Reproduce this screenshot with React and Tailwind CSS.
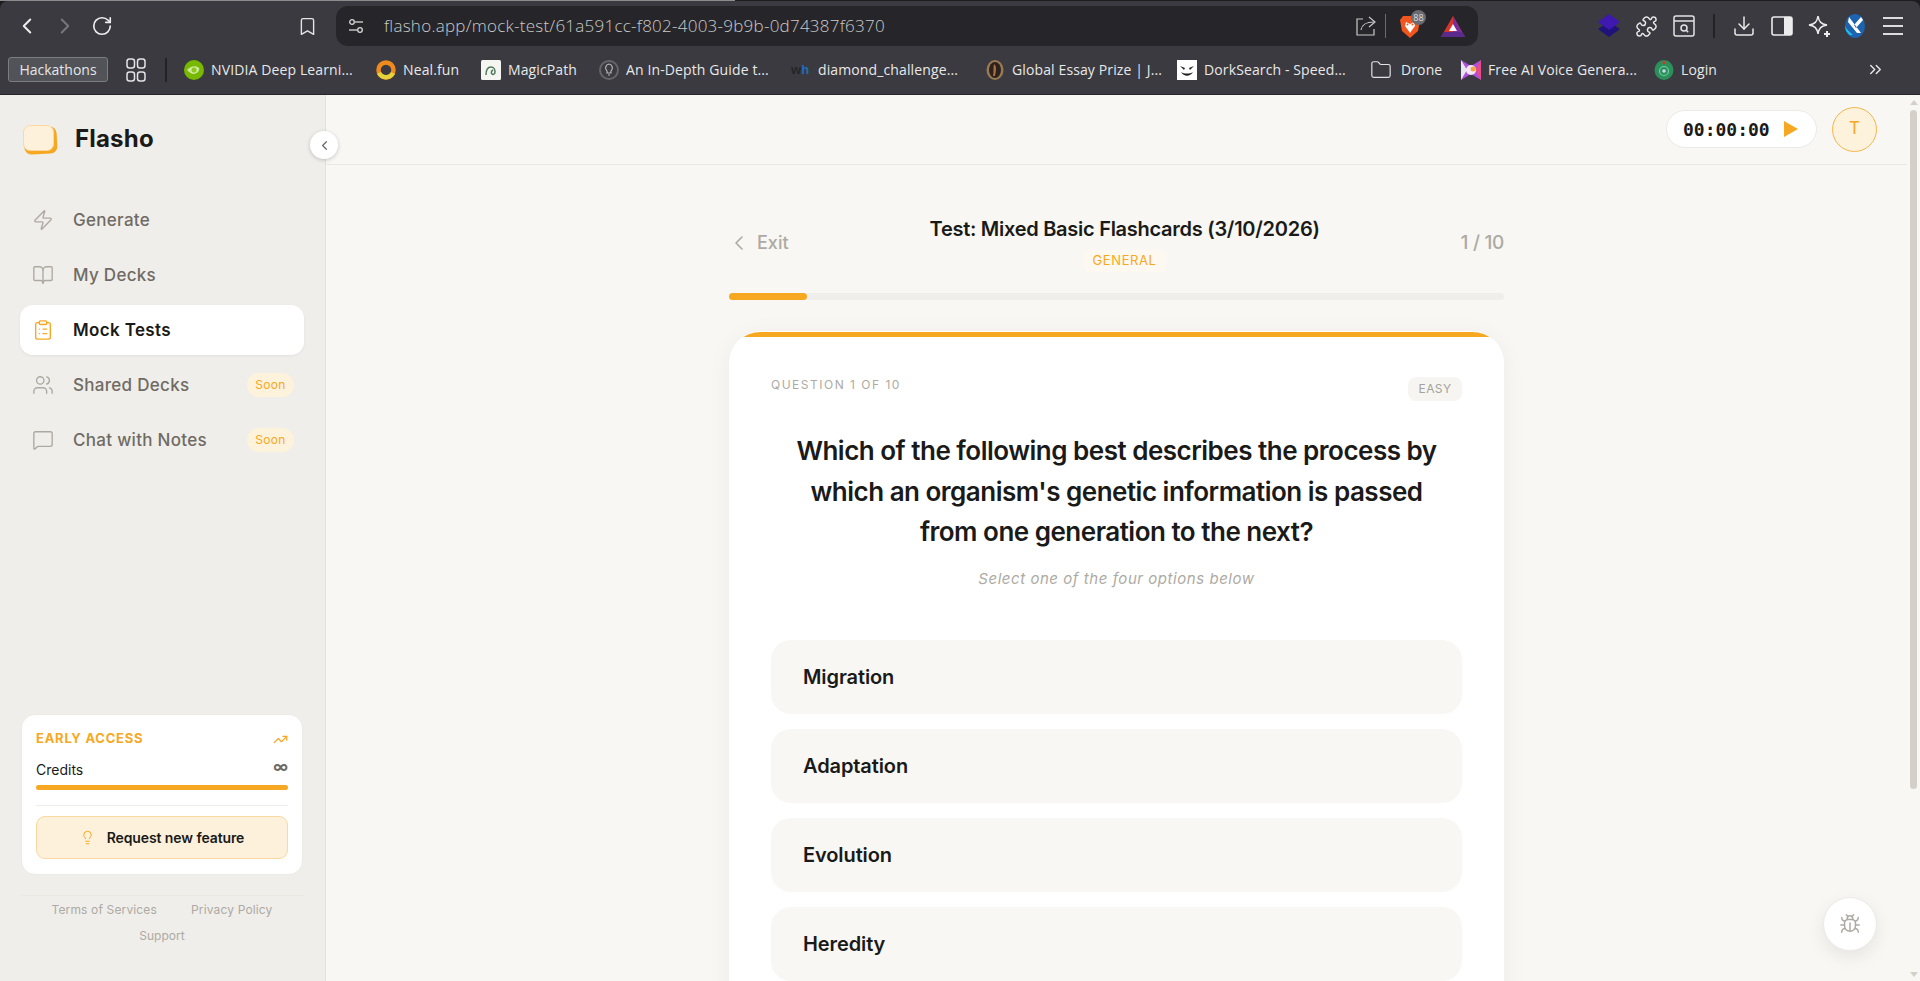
import React from "react";
import { ChevronLeft, ChevronRight, RotateCw, Bookmark, Puzzle, Download, Zap, BookOpen, Users, MessageSquare, ClipboardList, TrendingUp, Lightbulb, Bug, ChevronsRight, Folder } from "lucide-react";

const Ui = "font-['Inter','Liberation_Sans',sans-serif]";

function Favicon({ kind }) {
  if (kind === "nvidia") return <svg width="20" height="20" viewBox="0 0 20 20"><circle cx="10" cy="10" r="10" fill="#76b900" /><path d="M3 10c3-4 9-5 12-2 1 2-1 5-5 6-3 0-5-2-7-4z" fill="#cfe89a" /><circle cx="10" cy="10" r="2.5" fill="#8cc820" /></svg>;
  if (kind === "neal") return <svg width="20" height="20" viewBox="0 0 20 20"><circle cx="10" cy="10" r="7.5" fill="none" stroke="#ef8a1f" strokeWidth="4.5" /><path d="M3 13a8 8 0 0 0 14 0" fill="none" stroke="#e6d23a" strokeWidth="4.5" /></svg>;
  if (kind === "magic") return <svg width="20" height="20" viewBox="0 0 20 20"><rect width="20" height="20" rx="1.5" fill="#f5f5f2" /><path d="M5 15c0-5 2-8 5-8s4 3 4 5-2 3-3 2-1-3 1-4" fill="none" stroke="#4e7a5a" strokeWidth="1.5" /></svg>;
  if (kind === "guide") return <svg width="20" height="20" viewBox="0 0 20 20"><circle cx="10" cy="10" r="9" fill="none" stroke="#66666a" strokeWidth="2" /><path d="M10 4a4 4 0 0 0-2 7v2h4v-2a4 4 0 0 0-2-7z" fill="none" stroke="#b8b8b8" strokeWidth="1.2" /><path d="M9 15h2" stroke="#b8b8b8" strokeWidth="1.2" /></svg>;
  if (kind === "wh") return <span className="w-5 text-[13px] leading-5 font-bold font-['Liberation_Sans',sans-serif] text-[#23262c]">w<span className="text-[#1d6fb8]">h</span></span>;
  if (kind === "global") return <svg width="20" height="20" viewBox="0 0 20 20"><ellipse cx="10" cy="10" rx="8.5" ry="10" fill="#9a7a50" /><ellipse cx="10" cy="10" rx="6" ry="8" fill="#2b2322" /><path d="M9 4c3 2 2 7 1 12H8c1-4 0-8 1-12z" fill="#b0703c" /></svg>;
  if (kind === "dork") return <svg width="20" height="20" viewBox="0 0 20 20"><rect width="20" height="20" fill="#fff" /><path d="M3 6l5 2-1 2zM17 6l-5 2 1 2z" fill="#222" /><path d="M4 12c3 5 9 5 12 0-3 2-9 2-12 0z" fill="#222" /></svg>;
  if (kind === "folder") return <Folder size={22} strokeWidth={1.3} className="shrink-0 text-[#e2e2e2]" />;
  if (kind === "free") return <svg width="20" height="20" viewBox="0 0 20 20"><path d="M0 0l10 6 10-6v20l-10-6-10 6z" fill="#b04fd8" /><path d="M0 0l6 10-6 10z" fill="#e8e8f0" /><path d="M20 0l-6 10 6 10z" fill="#e84b8a" /><circle cx="10" cy="10" r="5" fill="#f4e8ff" /><circle cx="12" cy="9" r="2.5" fill="#f3a43c" /></svg>;
  return <svg width="20" height="20" viewBox="0 0 20 20"><ellipse cx="10" cy="10" rx="9.5" ry="10" fill="#2c8f5c" /><circle cx="10" cy="11" r="4.5" fill="none" stroke="#6fd0a0" strokeWidth="1.2" /><circle cx="10" cy="11" r="1.8" fill="#c8d8e8" /><circle cx="10" cy="2.5" r="1.5" fill="#d8352a" /></svg>;
}

const bookmarks = [
  { k: "nvidia", t: "NVIDIA Deep Learni...", w: "w-[145px]", g: "gap-[7px]" },
  { k: "neal", t: "Neal.fun", w: "w-[58px]", g: "gap-[7px]" },
  { k: "magic", t: "MagicPath", w: "w-[71px]", g: "gap-[7px]" },
  { k: "guide", t: "An In-Depth Guide t...", w: "w-[145px]", g: "gap-[7px]" },
  { k: "wh", t: "diamond_challenge...", w: "w-[147px]", g: "gap-[7px]" },
  { k: "global", t: "Global Essay Prize | J...", w: "w-[145px]", g: "gap-[7px]" },
  { k: "dork", t: "DorkSearch - Speed...", w: "w-[147px]", g: "gap-[7px]" },
  { k: "folder", t: "Drone", w: "w-[40px]", g: "gap-[10px]" },
  { k: "free", t: "Free AI Voice Genera...", w: "w-[146px]", g: "gap-[7px]" },
  { k: "login", t: "Login", w: "w-[36px]", g: "gap-[7px]" },
];

function BrowserChrome() {
  return (
    <div className="h-[95px] shrink-0 bg-[#1d1d20] font-['Open_Sans',sans-serif]">
      <div className="h-px w-[735px] bg-[#8c8c8c]" />
      <div className="h-[94px] rounded-t-[8px] bg-[#3a3a40] border-b border-[#26262a] flex flex-col">
        <div className="h-[50px] shrink-0 flex items-center">
          <ChevronLeft size={26} strokeWidth={1.8} className="ml-[14px] text-[#eeeeee]" />
          <ChevronRight size={26} strokeWidth={1.8} className="ml-[12px] text-[#77777c]" />
          <RotateCw size={22} strokeWidth={1.8} className="ml-[13px] text-[#eeeeee]" />
          <Bookmark size={21} strokeWidth={1.6} className="ml-[184px] text-[#e4e4e4]" />
          <div className="ml-[18px] w-[1142px] h-[40px] rounded-[12px] bg-[#26262a] flex items-center">
            <svg width="20" height="20" viewBox="0 0 20 20" className="ml-[10px] text-[#d8d8d8]" fill="none" stroke="currentColor" strokeWidth="1.3"><circle cx="6" cy="6" r="2.3" /><path d="M9 6h8" /><circle cx="14" cy="14" r="2.3" /><path d="M3 14h8" /></svg>
            <span className="ml-[18px] w-[500px] text-[17px] tracking-[0.25px] font-light text-[#c9c9c9] whitespace-nowrap">flasho.app/mock-test/61a591cc-f802-4003-9b9b-0d74387f6370</span>
            <svg width="21" height="21" viewBox="0 0 21 21" fill="none" stroke="#c8c8c8" strokeWidth="1.2" className="ml-[471px]"><path d="M8 3H2v16h17v-6" /><path d="M6 14c1-6 5-8 13-8" /><path d="M14 1l6 5-6 5" /></svg>
            <div className="ml-[9px] h-[24px] w-px bg-[#6c6c70]" />
            <div className="relative ml-[14px] w-[20px] h-[25px]">
              <svg width="20" height="25" viewBox="0 0 20 25"><path d="M3 2h14l3 4-2 11-8 7-8-7L0 6z" fill="#f0561d" /><path d="M6 8l4 2 4-2 1 4-3 4-2 3-2-3-3-4z" fill="#fff" /><circle cx="7.5" cy="10.5" r="1" fill="#f0561d" /><circle cx="12.5" cy="10.5" r="1" fill="#f0561d" /></svg>
              <span className="absolute left-[11px] -top-[4px] w-[15px] h-[15px] rounded-full bg-[#6a6a70] text-[9px] leading-[15px] text-center text-[#dddddd]">88</span>
            </div>
            <svg width="24" height="21" viewBox="0 0 24 21" className="ml-[21px]"><path d="M12 0l12 21H0z" fill="#d8352a" /><path d="M12 0l12 21H12z" fill="#7a2d9c" /><path d="M0 21h24l-3-5H3z" fill="#5a2a8c" /><path d="M12 8l4 7H8z" fill="#fff" /></svg>
          </div>
          <svg width="22" height="24" viewBox="0 0 22 24" className="ml-[120px]"><path d="M11 8l11 7-11 8L0 15z" fill="#1f1278" /><path d="M11 0l11 8-11 8L0 8z" fill="#3f18b0" /></svg>
          <Puzzle size={23} strokeWidth={1.5} className="ml-[15px] text-[#eaeaea]" />
          <svg width="22" height="22" viewBox="0 0 22 22" fill="none" stroke="#e4e4e4" strokeWidth="1.5" className="ml-[15px]"><rect x="1" y="1" width="20" height="20" rx="2" /><path d="M1 6h20" /><circle cx="11" cy="13" r="3" /><path d="M13.2 15.2l2 2" /></svg>
          <div className="ml-[18px] h-[24px] w-[2px] bg-[#232326]" />
          <Download size={24} strokeWidth={1.5} className="ml-[17px] text-[#e8e8e8]" />
          <svg width="22" height="20" viewBox="0 0 22 20" className="ml-[15px]"><rect x="1" y="1" width="20" height="18" rx="2" fill="none" stroke="#ececec" strokeWidth="1.6" /><rect x="13" y="1" width="8" height="18" fill="#ececec" /></svg>
          <svg width="23" height="24" viewBox="0 0 23 24" fill="none" stroke="#ececec" strokeWidth="1.5" className="ml-[15px]"><path d="M10 2c1 6 3 8 9 9-6 1-8 3-9 9-1-6-3-8-9-9 6-1 8-3 9-9z" /><path d="M19 17v6M16 20h6" strokeWidth="2" /></svg>
          <svg width="20" height="24" viewBox="0 0 20 24" className="ml-[14px]"><ellipse cx="10" cy="12" rx="10" ry="12" fill="#1d63b0" /><path d="M4 3l12 16h-4L3 8zM16 3L9 11l2 3 7-8z" fill="#fff" /><path d="M0 12c2 4 5 6 8 9H5C2 19 0 16 0 12z" fill="#24c0e8" /></svg>
          <div className="ml-[18px] w-[20px] flex flex-col gap-[6px]">
            <div className="h-[2px] bg-[#dcdcdc]" /><div className="h-[2px] bg-[#dcdcdc]" /><div className="h-[2px] bg-[#dcdcdc]" />
          </div>
        </div>
        <div className="h-[37px] shrink-0 flex items-center">
          <div className="ml-[8px] w-[100px] h-[25px] rounded-[3px] bg-[#515359] border border-[#7b7d83] flex items-center justify-center text-[14px] text-[#e6e6e6]">Hackathons</div>
          <svg width="20" height="24" viewBox="0 0 20 24" fill="none" stroke="#e4e4e4" strokeWidth="1.5" className="ml-[18px]"><rect x="1" y="1" width="7.5" height="9" rx="2.5" /><rect x="11.5" y="1" width="7.5" height="9" rx="2.5" /><rect x="1" y="14" width="7.5" height="9" rx="2.5" /><rect x="11.5" y="14" width="7.5" height="9" rx="2.5" /></svg>
          <div className="ml-[19px] h-[24px] w-[2px] bg-[#232326]" />
          <div className="ml-[17px] flex items-center gap-5">
            {bookmarks.map((b) => (
              <div key={b.t} className={`flex items-center ${b.g}`}>
                <span className="w-5 h-5 flex items-center justify-center shrink-0"><Favicon kind={b.k} /></span>
                <span className={`${b.w} text-[14px] text-[#e8e8e8] whitespace-nowrap tracking-[0.12px]`}>{b.t}</span>
              </div>
            ))}
          </div>
          <ChevronsRight size={19} strokeWidth={1.8} className="ml-auto mr-[35px] text-[#e8e8e8]" />
        </div>
      </div>
    </div>
  );
}

const nav = [
  { l: "Generate", I: Zap },
  { l: "My Decks", I: BookOpen },
  { l: "Mock Tests", I: ClipboardList, active: true },
  { l: "Shared Decks", I: Users, soon: true },
  { l: "Chat with Notes", I: MessageSquare, soon: true },
];

function Sidebar() {
  return (
    <aside className="relative z-10 w-[326px] shrink-0 bg-[#f0eeea] border-r border-[#e3e1dc] flex flex-col pl-[20px] pr-[21px]">
      <div className="h-[85px] flex items-center pl-[3px]">
        <div className="relative w-[33px] h-[28px] mt-[3px]">
          <div className="absolute left-[1px] top-[2px] w-[33px] h-[27px] rounded-[7px] bg-[#f7a823] -rotate-3" />
          <div className="absolute inset-0 w-[31px] h-[26px] rounded-[7px] bg-[#fdf1db] border border-[#fad9a2]" />
        </div>
        <span className="ml-[19px] mt-[2px] text-[24px] font-bold tracking-[0.2px] text-[#1a1a18]">Flasho</span>
      </div>
      <button className="absolute right-[-13px] top-[36px] w-[28px] h-[28px] rounded-full bg-white shadow-[0_1px_4px_rgba(0,0,0,0.2)] flex items-center justify-center text-[#6f6b64]">
        <ChevronLeft size={15} strokeWidth={2} />
      </button>
      <nav className="mt-[15px] flex flex-col gap-[5px]">
        {nav.map(({ l, I, active, soon }) => (
          <div key={l} className={`h-[50px] flex items-center pl-[12px] pr-[10px] rounded-[13px] ${active ? "bg-white shadow-[0_1px_3px_rgba(0,0,0,0.06)]" : ""}`}>
            <I size={22} strokeWidth={1.5} className={active ? "text-[#f7a823]" : "text-[#adaaa3]"} />
            <span className={`ml-[19px] mt-[1px] text-[17px] ${active ? "font-semibold tracking-[0.35px] text-[#1a1a18]" : "font-medium tracking-[0.3px] text-[#6f6b64]"}`}>{l}</span>
            {soon && <span className="ml-auto w-[47px] h-[24px] rounded-full bg-[#fdf2dc] text-[#f7a823] text-[12px] tracking-[0.3px] flex items-center justify-center">Soon</span>}
          </div>
        ))}
      </nav>
      <div className="mt-auto mb-[32px] w-[284px]">
        <div className="ml-[1px] w-[282px] h-[161px] rounded-[14px] bg-white border border-[#eceae5] px-[14px] pt-[16px]">
          <div className="flex items-center justify-between h-[16px]">
            <span className="text-[13px] font-bold tracking-[0.75px] text-[#f7a823]">EARLY ACCESS</span>
            <TrendingUp size={15} strokeWidth={2} className="text-[#f7a823]" />
          </div>
          <div className="mt-[12px] flex items-start justify-between h-[22px]">
            <span className="text-[14px] leading-[22px] text-[#1a1a18]">Credits</span>
            <span className="text-[15px] leading-[16px] font-bold text-[#6f6b64]">∞</span>
          </div>
          <div className="mt-[4px] h-[5px] rounded-full bg-[#f7a823]" />
          <div className="mt-[15px] h-px bg-[#eeece8]" />
          <div className="mt-[10px] h-[43px] rounded-[9px] bg-[#fdf1dc] border border-[#f9d9a0] flex items-center justify-center gap-[12px] text-[14px] font-semibold tracking-[-0.1px] text-[#1a1a18]">
            <Lightbulb size={15} strokeWidth={1.6} className="text-[#f7a823]" />
            Request new feature
          </div>
        </div>
        <div className="mt-[20px] border-t border-[#ebe9e4] pt-[1px] text-[12px] text-[#adaaa3] leading-[26px]">
          <div className="flex justify-center gap-[34px] tracking-[0.15px]"><span>Terms of Services</span><span>Privacy Policy</span></div>
          <div className="text-center">Support</div>
        </div>
      </div>
    </aside>
  );
}

function Main() {
  return (
    <main className="relative flex-1 flex flex-col min-w-0 bg-[#f8f7f3]">
      <div className="h-[70px] shrink-0 border-b border-[#eae8e3] flex items-start justify-end pr-[30px] pt-[12px]">
        <div className="mt-[3px] w-[151px] h-[38px] rounded-full bg-white border border-[#eceae5] flex items-center pl-[16px] font-['DejaVu_Sans_Mono',monospace] font-bold text-[18px] text-[#1a1a18]">
          00:00:00
          <svg width="14" height="16" viewBox="0 0 14 16" className="ml-[14px]"><path d="M0 0l14 8L0 16z" fill="#f7a823" /></svg>
        </div>
        <div className="ml-[15px] w-[45px] h-[45px] rounded-full bg-[#fdf2dc] border border-[#f7b64c] flex items-center justify-center pb-[2px] text-[17px] font-normal text-[#f7a823]">T</div>
      </div>
      <div className="flex-1 overflow-hidden">
        <div className="w-[775px] mx-auto">
          <div className="pt-[49px] flex items-center justify-between">
            <div className="flex items-center gap-[6px] -ml-[2px] -mt-[1px] text-[#adaaa3] text-[18px] font-medium">
              <ChevronLeft size={24} strokeWidth={1.6} />Exit
            </div>
            <div className="flex flex-col items-center">
              <h1 className="text-[20px] leading-[30px] font-semibold tracking-[-0.27px] text-[#1a1a18] whitespace-nowrap">Test: Mixed Basic Flashcards (3/10/2026)</h1>
              <span className="mt-[6px] w-[82px] h-[22px] rounded-[6px] bg-[#fdf9f0] text-[13px] tracking-[0.6px] text-[#f7a823] flex items-center justify-center">GENERAL</span>
            </div>
            <div className="text-[#adaaa3] text-[19px] font-medium tracking-[-0.3px]">1 / 10</div>
          </div>
          <div className="mt-[21px] h-[7px] rounded-full bg-[#f0eeea]">
            <div className="h-full w-[10%] rounded-full bg-[#f7a823]" />
          </div>
          <div className="mt-[31px] rounded-[32px] bg-white overflow-hidden shadow-[0_4px_24px_rgba(0,0,0,0.05)] border-t border-white pb-10">
            <div className="h-[5px] bg-[#f7a823]" />
            <div className="px-[42px] pt-[40px]">
              <div className="flex justify-between items-start">
                <span className="text-[12px] leading-[16px] tracking-[1.5px] text-[#adaaa3]">QUESTION 1 OF 10</span>
                <span className="w-[54px] h-[24px] rounded-[8px] bg-[#f6f5f1] text-[12px] tracking-[0.4px] text-[#a5a29b] flex items-center justify-center">EASY</span>
              </div>
              <h2 className="mt-[30px] text-center text-[26px] leading-[40.5px] font-semibold tracking-[-0.5px] text-[#1a1a18]">
                Which of the following best describes the process by<br />which an organism's genetic information is passed<br />from one generation to the next?
              </h2>
              <p className="mt-[16px] text-center text-[15px] leading-[20px] italic tracking-[0.55px] text-[#adaaa3]">Select one of the four options below</p>
              <div className="mt-[51px] flex flex-col gap-[15px]">
                {["Migration", "Adaptation", "Evolution", "Heredity"].map((o) => (
                  <div key={o} className="h-[74px] rounded-[20px] bg-[#f8f7f3] flex items-center pl-[32px] text-[20px] font-semibold tracking-[-0.1px] text-[#1a1a18]">{o}</div>
                ))}
              </div>
            </div>
          </div>
        </div>
      </div>
      <button className="absolute right-[30px] bottom-[30px] w-[54px] h-[54px] rounded-full bg-white border border-[#eceae5] shadow-[0_6px_18px_rgba(0,0,0,0.08)] flex items-center justify-center text-[#adaaa3]">
        <Bug size={22} strokeWidth={1.6} />
      </button>
    </main>
  );
}

function Scrollbar() {
  return (
    <div className="w-[13px] shrink-0 bg-[#f8f7f3] flex flex-col items-center">
      <div className="mt-[5px] w-0 h-0 border-x-[4px] border-x-transparent border-b-[5px] border-b-[#d4d0c9]" />
      <div className="mt-[5px] w-[7px] h-[679px] rounded-full bg-[#d4d0c9]" />
      <div className="mt-auto mb-[4px] w-0 h-0 border-x-[4px] border-x-transparent border-t-[5px] border-t-[#d4d0c9]" />
    </div>
  );
}

export default function App() {
  return (
    <div className={`h-[981px] w-[1920px] overflow-hidden flex flex-col bg-[#f8f7f3] ${Ui}`}>
      <BrowserChrome />
      <div className="flex-1 flex min-h-0">
        <Sidebar />
        <Main />
        <Scrollbar />
      </div>
    </div>
  );
}
